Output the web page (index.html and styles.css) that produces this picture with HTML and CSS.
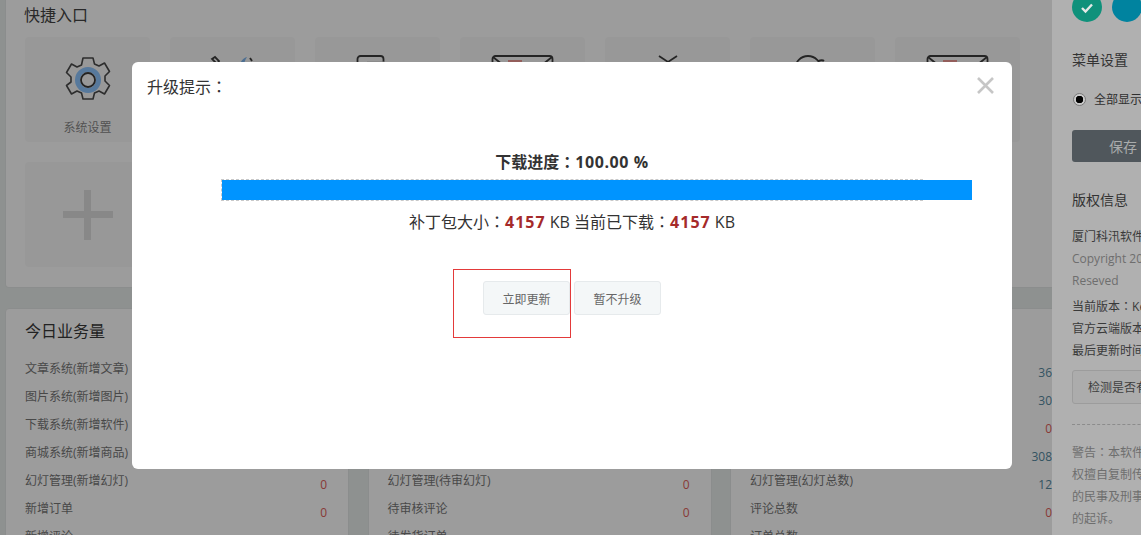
FILE: index.html
```html
<!DOCTYPE html>
<html lang="zh-CN">
<head>
<meta charset="utf-8">
<title>升级提示</title>
<link rel="stylesheet" href="styles.css">
</head>
<body>
<div class="page">
  <main class="main">
    <section class="quick">
      <h2 class="quick-title">快捷入口</h2>
      <div class="tiles">
        <a class="tile">
          <svg class="icon" width="50" height="50" viewBox="0 0 50 50"><path class="gear" d="M20 3h10l1.500 6 4.500 2 5.500-3 5 8.500-4.500 4.500v5l4.500 4.500-5 8.500-5.500-3-4.500 2-1.500 6H20l-1.500-6-4.500-2-5.500 3-5-8.500L8 27v-5l-4.500-4.500 5-8.500 5.500 3 4.500-2z"/><circle class="gear-blue" cx="25" cy="25" r="10.500"/><circle class="gear-in" cx="25" cy="25" r="7"/></svg>
          <span class="tile-label">系统设置</span>
        </a>
        <a class="tile"><svg class="icon" width="50" height="50" viewBox="0 0 50 50"><path class="line" d="M4 4l3-2 4 4-2 3zM9 8l6 9"/><path class="moon" d="M31 12c1-5 4-9 8-10-2 3-3 6-3 9z"/><path class="line" d="M42 3l2 3"/></svg></a>
        <a class="tile"><svg class="icon" width="50" height="50" viewBox="0 0 50 50"><rect class="line" x="4.500" y="1" width="26" height="30" rx="3"/><path class="soft" d="M14 8h18"/></svg></a>
        <a class="tile"><svg class="icon" width="64" height="50" viewBox="0 0 64 50"><rect class="line" x="1.500" y="1" width="60" height="40" rx="3"/><path class="line" d="M2 2l10 8M61 2L51 10"/><rect class="stamp" x="17" y="5" width="14" height="9"/></svg></a>
        <a class="tile"><svg class="icon" width="50" height="50" viewBox="0 0 50 50"><path class="line" d="M16 1l9 6 9-6M25 7l-8 6M25 7l8 6"/></svg></a>
        <a class="tile"><svg class="icon" width="50" height="50" viewBox="0 0 50 50"><circle class="line" cx="20" cy="14" r="13"/><path class="line" d="M30 6c3-1 5-1 6 0"/></svg></a>
        <a class="tile"><svg class="icon" width="64" height="50" viewBox="0 0 64 50"><rect class="line" x="1.500" y="1" width="60" height="40" rx="3"/><path class="line" d="M2 2l10 8M61 2L51 10"/><rect class="stamp" x="17" y="5" width="14" height="9"/></svg></a>
        <a class="tile tile-add"><span class="plus"></span></a>
      </div>
    </section>
    <section class="stats">
      <div class="card">
        <h3 class="card-title">今日业务量</h3>
        <div class="row"><span>文章系统(新增文章)</span><b class="num red">0</b></div>
        <div class="row"><span>图片系统(新增图片)</span><b class="num red">0</b></div>
        <div class="row"><span>下载系统(新增软件)</span><b class="num red">0</b></div>
        <div class="row"><span>商城系统(新增商品)</span><b class="num red">0</b></div>
        <div class="row"><span>幻灯管理(新增幻灯)</span><b class="num red">0</b></div>
        <div class="row"><span>新增订单</span><b class="num red">0</b></div>
        <div class="row"><span>新增评论</span><b class="num red">0</b></div>
      </div>
      <div class="card">
        <h3 class="card-title">待处理事务</h3>
        <div class="row"><span>文章系统(待审文章)</span><b class="num red">0</b></div>
        <div class="row"><span>图片系统(待审图片)</span><b class="num red">0</b></div>
        <div class="row"><span>下载系统(待审软件)</span><b class="num red">0</b></div>
        <div class="row"><span>商城系统(待审商品)</span><b class="num red">0</b></div>
        <div class="row"><span>幻灯管理(待审幻灯)</span><b class="num red">0</b></div>
        <div class="row"><span>待审核评论</span><b class="num red">0</b></div>
        <div class="row"><span>待发货订单</span><b class="num red">0</b></div>
      </div>
      <div class="card">
        <h3 class="card-title">数据统计</h3>
        <div class="row"><span>文章系统(文章总数)</span><b class="num blue">36</b></div>
        <div class="row"><span>图片系统(图片总数)</span><b class="num blue">30</b></div>
        <div class="row"><span>下载系统(软件总数)</span><b class="num red">0</b></div>
        <div class="row"><span>商城系统(商品总数)</span><b class="num blue">308</b></div>
        <div class="row"><span>幻灯管理(幻灯总数)</span><b class="num blue">12</b></div>
        <div class="row"><span>评论总数</span><b class="num red">0</b></div>
        <div class="row"><span>订单总数</span><b class="num red">0</b></div>
      </div>
    </section>
  </main>

  <aside class="side">
    <div class="side-inner">
      <div class="swatches">
        <span class="swatch swatch-green"><svg width="14" height="12" viewBox="0 0 14 12"><path d="M2 6l3.500 3.500L12 2.500" fill="none" stroke="#e4e9e7" stroke-width="2.400"/></svg></span>
        <span class="swatch swatch-blue"></span>
      </div>
      <h4 class="side-title side-title-menu">菜单设置</h4>
      <label class="radio-row"><span class="radio"></span>全部显示</label>
      <button class="save">保存</button>
      <h4 class="side-title side-title-copy">版权信息</h4>
      <p class="side-text dark">厦门科汛软件开发有限公司</p>
      <p class="side-text grey side-block">Copyright 2006-2018<br>Reseved</p>
      <p class="side-text dark">当前版本<span class="colon" lang="zh-Hant">：</span>KesionCMS</p>
      <p class="side-text dark">官方云端版本</p>
      <p class="side-text dark">最后更新时间</p>
      <button class="check">检测是否有新版本</button>
      <div class="dash"></div>
      <p class="side-text grey">警告<span class="colon" lang="zh-Hant">：</span>本软件受著作<br>权擅自复制传播<br>的民事及刑事责任<br>的起诉。</p>
    </div>
  </aside>
</div>

<div class="overlay"></div>

<div class="modal">
  <div class="modal-head">升级提示<span class="colon" lang="zh-Hant">：</span></div>
  <svg class="close" width="17" height="17" viewBox="0 0 17 17"><path d="M1 1l15 15M16 1L1 16" stroke="#c6c6c6" stroke-width="2.600"/></svg>
  <div class="progress-text">下载进度<span class="colon" lang="zh-Hant">：</span><span class="pct">100.00 %</span></div>
  <div class="track"><div class="fill"></div></div>
  <div class="size-text">补丁包大小<span class="colon" lang="zh-Hant">：</span><strong>4157</strong> KB 当前已下载<span class="colon" lang="zh-Hant">：</span><strong>4157</strong> KB</div>
  <div class="actions">
    <button class="btn">立即更新</button>
    <button class="btn">暂不升级</button>
  </div>
  <div class="marker"></div>
</div>
</body>
</html>
```
FILE: styles.css
```css
* { box-sizing: border-box; }
html, body { margin: 0; height: 100%; overflow: hidden; }
body {
  font-family: "Open Sans", "Noto Sans CJK SC", sans-serif;
  font-size: 12px;
  color: #777;
  background: #e9eeeb;
}
h2, h3, h4, p { margin: 0; font-weight: 400; }
button { font-family: inherit; cursor: pointer; }
.colon { font-family: "Noto Sans CJK TC", sans-serif; }

.page { display: flex; height: 535px; overflow: hidden; }
.main { width: 1052px; flex: none; overflow: hidden; padding-left: 5px; }

.quick {
  width: 1200px;
  height: 288px;
  background: #fff;
  border: 1px solid #e3e7e6;
  border-top: 0;
  border-radius: 0 0 4px 4px;
  padding: 4px 19px 0;
}
.quick-title { font-size: 16px; line-height: 22px; color: #444; margin-left: -1px; }
.tiles {
  display: grid;
  grid-template-columns: repeat(7, 125px);
  grid-auto-rows: 105px;
  gap: 20px;
  margin-top: 11px;
}
.tile {
  display: flex;
  flex-direction: column;
  align-items: center;
  padding-top: 18px;
  background: #f9f9f9;
  border-radius: 4px;
}
.icon { display: block; flex: none; }
.tile-label { margin-top: 13px; line-height: 20px; color: #888; }
.tile-add { justify-content: center; padding-top: 0; }
.plus {
  display: block;
  width: 50px;
  height: 50px;
  background:
    linear-gradient(#dedede, #dedede) center / 50px 7px no-repeat,
    linear-gradient(#dedede, #dedede) center / 7px 50px no-repeat;
}

.gear { fill: none; stroke: #4a4a4a; stroke-width: 1.600; stroke-linejoin: round; }
.gear-blue { fill: none; stroke: #8fc6ff; stroke-width: 5; }
.gear-in { fill: none; stroke: #3a3a3a; stroke-width: 1.800; }
.line { fill: none; stroke: #3c3c3c; stroke-width: 1.800; }
.soft { fill: none; stroke: #cfcfcf; stroke-width: 3; }
.moon { fill: #7fb6ee; }
.stamp { fill: #f09a96; }

.stats {
  display: grid;
  grid-template-columns: repeat(3, 344px);
  gap: 18.500px;
  margin-top: 20px;
}
.card {
  height: 300px;
  background: #fff;
  border: 1px solid #e3e7e6;
  border-radius: 4px;
  padding: 11px 21px 0 19px;
}
.card-title { font-size: 16px; line-height: 22px; color: #383838; margin-bottom: 17px; }
.row {
  display: flex;
  justify-content: space-between;
  height: 28px;
  line-height: 20px;
  color: #777;
}
.num { font-weight: 400; font-size: 12px; padding-top: 4px; }
.red { color: #e0605a; }
.blue { color: #55899f; }

.overlay {
  position: fixed;
  inset: 0;
  background: rgba(0, 0, 0, .39);
  z-index: 10;
}

.side {
  position: relative;
  z-index: 20;
  flex: none;
  width: 89px;
  overflow: hidden;
  background: #b0b0b0;
}
.side-inner { width: 300px; padding-left: 20px; }
.swatches { display: flex; gap: 10px; margin-top: -8px; }
.swatch {
  flex: none;
  display: flex;
  align-items: center;
  justify-content: center;
  width: 30px;
  height: 30px;
  border-radius: 50%;
}
.swatch-green { background: #0f917b; padding-top: 2px; }
.swatch-blue { background: #00839f; }
.side-title { font-size: 14px; line-height: 20px; color: #333; }
.side-title-menu { margin-top: 28px; }
.radio-row {
  display: flex;
  align-items: center;
  gap: 8px;
  height: 20px;
  margin-top: 19px;
  color: #2f2f2f;
}
.radio {
  flex: none;
  width: 13px;
  height: 13px;
  margin-left: 1px;
  border-radius: 50%;
  border: 1px solid #7a7a7a;
  background: radial-gradient(circle, #000 0 3.500px, #c9c9c9 4px);
}
.save {
  display: block;
  width: 102px;
  height: 32px;
  margin-top: 21px;
  padding: 0;
  border: 0;
  border-radius: 3px;
  background: #50575c;
  color: #a9acac;
  font-size: 14px;
}
.side-title-copy { margin-top: 28px; margin-bottom: 16px; }
.side-text { line-height: 22px; font-size: 12px; white-space: nowrap; }
.side-block { margin-bottom: 3px; }
.dark { color: #3a3a3a; }
.grey { color: #6e6e6e; }
.check {
  display: block;
  width: 130px;
  height: 34px;
  margin-top: 8px;
  padding: 0 0 0 15px;
  text-align: left;
  background: #acacac;
  border: 1px solid #9c9c9c;
  border-radius: 3px;
  color: #3f3f3f;
  font-size: 12px;
}
.dash { border-top: 1px dashed #8c8c8c; margin: 20px 0 16px; }

.modal {
  position: fixed;
  left: 132px;
  top: 62px;
  z-index: 30;
  width: 880px;
  height: 407px;
  background: #fff;
  border-radius: 6px;
  color: #333;
}
.modal-head { padding: 13px 15px 0; font-size: 16px; line-height: 22px; color: #333; }
.close { position: absolute; right: 18px; top: 15px; }
.progress-text {
  margin-top: 51px;
  text-align: center;
  font-size: 16px;
  line-height: 24px;
  font-weight: 700;
  color: #333;
}
.pct { letter-spacing: .6px; }
.track {
  width: 702px;
  height: 22px;
  margin: 5px auto 0;
  border: 1px dashed #c8c8c8;
}
.fill { width: 750px; height: 20px; background: #0094ff; }
.size-text {
  margin-top: 8px;
  text-align: center;
  font-size: 16px;
  line-height: 24px;
  color: #333;
}
.size-text strong { color: #a52a2a; font-weight: 700; letter-spacing: 1px; }
.actions { display: flex; justify-content: center; gap: 4px; margin-top: 47px; }
.btn {
  width: 87px;
  height: 34px;
  padding: 2px 0 0;
  background: #f4f7f8;
  border: 1px solid #e6eaec;
  border-radius: 3px;
  color: #666;
  font-size: 12px;
}
.marker {
  position: absolute;
  left: 321px;
  top: 207px;
  width: 118px;
  height: 69px;
  border: 1px solid #e33a3a;
}
```
